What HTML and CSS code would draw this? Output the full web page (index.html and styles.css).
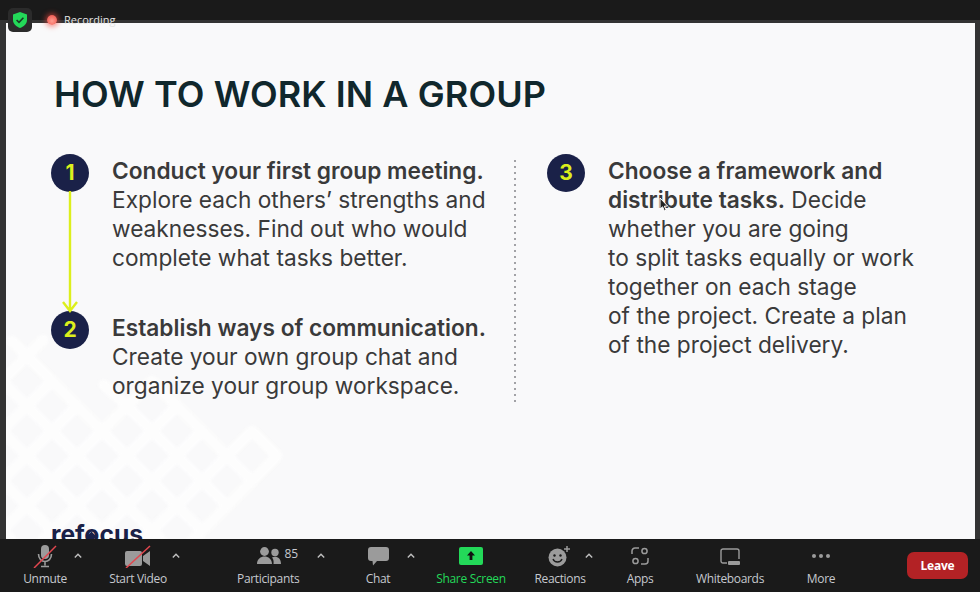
FILE: index.html
```html
<!DOCTYPE html>
<html lang="en">
<head>
  <meta charset="UTF-8">
  <title>Meeting - How to work in a group</title>
  <link rel="stylesheet" href="styles.css">
</head>
<body>
  <div class="window">
    <div class="topbar">
      <div class="shield-badge">
        <svg width="14" height="16" viewBox="0 0 14 16"><path d="M7 0 L14 2.5 V8 C14 12 10.5 14.6 7 16 C3.5 14.6 0 12 0 8 V2.5 Z" fill="#23d959"/><path d="M3.6 8 L6 10.4 L10.4 5.8" fill="none" stroke="#1a3a24" stroke-width="1.6"/></svg>
      </div>
      <span class="rec-dot"></span>
      <span class="rec-label">Recording</span>
    </div>

    <div class="stage">
      <div class="slide">
        <!-- lattice pattern, bottom left corner -->
        <svg class="lattice" width="290" height="220" viewBox="0 320 290 220">
          <defs><path id="cell" d="M-25 0 L0 -25 L25 0 L0 25 Z"/></defs>
          <g fill="none" stroke="#fdfdfd" stroke-width="11" stroke-linejoin="round" stroke-linecap="round">
            <path d="M27 357 L43 341 M27 357 L12 342 M127 407 L104 386"/>
            <use href="#cell" x="27" y="382"/><use href="#cell" x="2" y="407"/><use href="#cell" x="52" y="407"/>
            <use href="#cell" x="27" y="432"/><use href="#cell" x="127" y="432"/><use href="#cell" x="177" y="432"/>
            <use href="#cell" x="152" y="407"/><use href="#cell" x="77" y="432"/>
            <use href="#cell" x="2" y="457"/><use href="#cell" x="52" y="457"/><use href="#cell" x="102" y="457"/><use href="#cell" x="152" y="457"/><use href="#cell" x="202" y="457"/><use href="#cell" x="252" y="457"/>
            <use href="#cell" x="27" y="482"/><use href="#cell" x="77" y="482"/><use href="#cell" x="127" y="482"/><use href="#cell" x="177" y="482"/><use href="#cell" x="227" y="482"/>
            <use href="#cell" x="2" y="507"/><use href="#cell" x="52" y="507"/><use href="#cell" x="102" y="507"/><use href="#cell" x="152" y="507"/><use href="#cell" x="202" y="507"/>
            <use href="#cell" x="27" y="532"/><use href="#cell" x="77" y="532"/><use href="#cell" x="127" y="532"/><use href="#cell" x="177" y="532"/>
          </g>
        </svg>

        <h1>HOW TO WORK IN A GROUP</h1>

        <div class="columns">
          <div class="col-left">
            <svg class="arrow" width="20" height="122" viewBox="0 0 20 122"><path d="M10 0 V120 M3 111 L10 120 L17 111" fill="none" stroke="#dcef1c" stroke-width="2.4"/></svg>
            <div class="step step-one">
              <span class="num">1</span>
              <p><b>Conduct your first group meeting.</b><br>Explore each others’ strengths and<br>weaknesses. Find out who would<br>complete what tasks better.</p>
            </div>
            <div class="step">
              <span class="num">2</span>
              <p><b>Establish ways of communication.</b><br>Create your own group chat and<br>organize your group workspace.</p>
            </div>
          </div>
          <div class="divider"></div>
          <div class="col-right">
            <div class="step">
              <span class="num">3</span>
              <p><b>Choose a framework and<br>distribute tasks.</b> Decide<br>whether you are going<br>to split tasks equally or work<br>together on each stage<br>of the project. Create a plan<br>of the project delivery.</p>
            </div>
          </div>
        </div>

        <div class="logo">ref<span class="logo-o">o</span>cus</div>

        <svg class="cursor" width="10" height="16" viewBox="0 0 10 16"><path d="M1 1 V12 L3.6 9.8 L5.4 14 L7.2 13.2 L5.4 9.2 L8.6 9 Z" fill="#222" stroke="#fff" stroke-width="1"/></svg>
      </div>
    </div>

    <div class="toolbar">
      <div class="tool tool-unmute">
        <svg width="26" height="23" viewBox="0 0 26 23"><rect x="9" y="0" width="8" height="14" rx="4" fill="#9b9b9b"/><path d="M6.5 9 C6.5 19 19.5 19 19.5 9 M13 17 V20.5 M9 21.5 H17" fill="none" stroke="#9b9b9b" stroke-width="1.6"/><path d="M2 23 L24 1" stroke="#e2474f" stroke-width="1.5"/></svg>
        <span>Unmute</span>
      </div>
      <span class="caret"><svg width="8" height="5" viewBox="0 0 8 5"><path d="M0.8 4.4 L4 1.2 L7.2 4.4" fill="none" stroke="#c0c0c0" stroke-width="1.4"/></svg></span>

      <div class="tool tool-video">
        <svg width="26" height="23" viewBox="0 0 26 23"><path d="M2 6 H15 A2 2 0 0 1 17 8 V19 A2 2 0 0 1 15 21 H2 A2 2 0 0 1 0 19 V8 A2 2 0 0 1 2 6 Z M18 11 L25 6 V21 L18 16 Z" fill="#9b9b9b"/><path d="M1 23 L25 1" stroke="#e2474f" stroke-width="1.5"/></svg>
        <span>Start Video</span>
      </div>
      <span class="caret caret-video"><svg width="8" height="5" viewBox="0 0 8 5"><path d="M0.8 4.4 L4 1.2 L7.2 4.4" fill="none" stroke="#c0c0c0" stroke-width="1.4"/></svg></span>

      <div class="tool tool-people">
        <div class="people-icon">
          <svg width="24" height="18" viewBox="0 0 24 18"><circle cx="7.5" cy="4.5" r="4.4" fill="#9b9b9b"/><circle cx="18" cy="5.5" r="3.7" fill="#9b9b9b"/><path d="M0 17 C0 7 15 7 15 17 Z M16.5 17 C17 13.5 16 11.5 15 10.5 C19 8.5 24 10.5 24 17 Z" fill="#9b9b9b"/></svg>
          <em>85</em>
        </div>
        <span>Participants</span>
      </div>
      <span class="caret caret-people"><svg width="8" height="5" viewBox="0 0 8 5"><path d="M0.8 4.4 L4 1.2 L7.2 4.4" fill="none" stroke="#c0c0c0" stroke-width="1.4"/></svg></span>

      <div class="tool tool-chat">
        <svg width="21" height="19" viewBox="0 0 21 19"><path d="M3 0 H18 A3 3 0 0 1 21 3 V11 A3 3 0 0 1 18 14 H9 L5 18.5 L4.5 14 H3 A3 3 0 0 1 0 11 V3 A3 3 0 0 1 3 0 Z" fill="#9b9b9b"/></svg>
        <span>Chat</span>
      </div>
      <span class="caret caret-chat"><svg width="8" height="5" viewBox="0 0 8 5"><path d="M0.8 4.4 L4 1.2 L7.2 4.4" fill="none" stroke="#c0c0c0" stroke-width="1.4"/></svg></span>

      <div class="tool tool-share">
        <svg width="24" height="18" viewBox="0 0 24 18"><rect width="24" height="18" rx="2" fill="#23d959"/><path d="M12 4 L16 8.4 H13.4 V13 H10.6 V8.4 H8 Z" fill="#111"/></svg>
        <span>Share Screen</span>
      </div>

      <div class="tool tool-react">
        <svg width="24" height="21" viewBox="0 0 24 21"><circle cx="9.5" cy="11.5" r="9" fill="#9b9b9b"/><circle cx="6.5" cy="9.5" r="1.2" fill="#1a1a1a"/><circle cx="12.5" cy="9.5" r="1.2" fill="#1a1a1a"/><path d="M5 13 C6.5 17 12.5 17 14 13" fill="none" stroke="#1a1a1a" stroke-width="1.4"/><path d="M19 0 V6 M16 3 H22" stroke="#9b9b9b" stroke-width="1.5"/></svg>
        <span>Reactions</span>
      </div>
      <span class="caret caret-react"><svg width="8" height="5" viewBox="0 0 8 5"><path d="M0.8 4.4 L4 1.2 L7.2 4.4" fill="none" stroke="#c0c0c0" stroke-width="1.4"/></svg></span>

      <div class="tool tool-apps">
        <svg width="18" height="18" viewBox="0 0 18 18"><path d="M1 7 V4 A3 3 0 0 1 4 1 H8 M17 11 V14 A3 3 0 0 1 14 17 H10" fill="none" stroke="#9b9b9b" stroke-width="1.5"/><circle cx="13.5" cy="4" r="2.6" fill="none" stroke="#9b9b9b" stroke-width="1.5"/><circle cx="4.5" cy="14" r="2.6" fill="none" stroke="#9b9b9b" stroke-width="1.5"/></svg>
        <span>Apps</span>
      </div>

      <div class="tool tool-board">
        <svg width="20" height="17" viewBox="0 0 20 17"><path d="M7 15 H3 A2 2 0 0 1 1 13 V3 A2 2 0 0 1 3 1 H17 A2 2 0 0 1 19 3 V11" fill="none" stroke="#9b9b9b" stroke-width="1.4"/><rect x="8" y="13" width="12" height="4" rx="1" fill="#9b9b9b"/></svg>
        <span>Whiteboards</span>
      </div>

      <div class="tool tool-more">
        <svg width="20" height="6" viewBox="0 0 20 6"><circle cx="3" cy="3" r="2" fill="#9b9b9b"/><circle cx="10" cy="3" r="2" fill="#9b9b9b"/><circle cx="17" cy="3" r="2" fill="#9b9b9b"/></svg>
        <span>More</span>
      </div>

      <button class="leave">Leave</button>
    </div>
  </div>
</body>
</html>
```

FILE: styles.css
```css
* {
  box-sizing: border-box;
}

html, body {
  margin: 0;
  padding: 0;
  background-color: #1a1a1a;
}

.window {
  width: 980px;
  height: 592px;
  display: flex;
  flex-direction: column;
  position: relative;
  overflow: hidden;
  font-family: "Open Sans", "Noto Sans", sans-serif;
}

/* top strip with the security badge and recording label */
.topbar {
  height: 20px;
  position: relative;
  background-color: #1a1a1a;
  z-index: 2;
}

.shield-badge {
  position: absolute;
  left: 8px;
  top: 8px;
  width: 24px;
  height: 24px;
  background-color: #2b2b2b;
  border-radius: 5px;
  display: flex;
  align-items: center;
  justify-content: center;
}

.rec-dot {
  position: absolute;
  left: 47px;
  top: 15px;
  width: 10px;
  height: 10px;
  border-radius: 50%;
  background: radial-gradient(circle at 50% 60%, #ff9c90, #ee4a42);
  box-shadow: 0 0 5px 2px rgba(240, 70, 60, 0.55);
}

.rec-label {
  position: absolute;
  left: 64px;
  top: 12px;
  font-size: 11px;
  line-height: 16px;
  color: #e4e4e4;
}

.stage {
  height: 519px;
  padding: 3px 5px 0 6px;
  background-color: #333;
}

.slide {
  height: 516px;
  position: relative;
  overflow: hidden;
  padding: 0 0 0 45px;
  background-color: #f9f9fa;
  font-family: Inter, "Liberation Sans", sans-serif;
  color: #333;
}

.lattice {
  position: absolute;
  left: -6px;
  bottom: 0;
  filter: blur(1.5px);
}

h1 {
  position: relative;
  margin: 0;
  padding-top: 49px;
  padding-left: 3px;
  font-size: 36px;
  line-height: 44px;
  font-weight: 600;
  letter-spacing: 0.08px;
  color: #10272c;
}

.columns {
  position: relative;
  display: flex;
  margin-top: 38px;
}

.col-left {
  position: relative;
  width: 463px;
}

/* dots are spaced wider than a dotted border would give */
.divider {
  width: 2px;
  height: 242px;
  margin-top: 6px;
  background: repeating-linear-gradient(to bottom, #a2a2a6 0, #a2a2a6 2px, transparent 2px, transparent 6px);
}

.col-right {
  margin-left: 31px;
}

.step {
  display: flex;
}

.step-one {
  margin-bottom: 39px;
}

.num {
  flex: none;
  width: 38px;
  height: 38px;
  margin-right: 23px;
  border-radius: 50%;
  background-color: #1a2148;
  color: #dcef1c;
  font-weight: 700;
  font-size: 21px;
  line-height: 38px;
  text-align: center;
}

.step p {
  margin: 2px 0 0;
  font-size: 22.7px;
  line-height: 29px;
  color: #3a3a3a;
}

.step b {
  font-weight: 600;
}

.arrow {
  position: absolute;
  left: 9px;
  top: 37px;
}

.logo {
  position: absolute;
  left: 45px;
  top: 496px;
  font-size: 24.6px;
  line-height: 30px;
  font-weight: 700;
  color: #1a2148;
}

.logo-o {
  position: relative;
}

/* small diamond inside the o of the logo */
.logo-o::after {
  content: "";
  position: absolute;
  left: 50%;
  top: 55%;
  width: 7px;
  height: 7px;
  margin: -3px 0 0 -3.5px;
  background-color: #1a2148;
  transform: rotate(45deg);
}

.cursor {
  position: absolute;
  left: 653px;
  top: 174px;
}

/* bottom meeting toolbar */
.toolbar {
  flex: 1;
  display: flex;
  align-items: flex-start;
  padding-left: 17px;
  background-color: #1a1a1a;
}

.tool {
  flex: none;
  display: grid;
  grid-template-rows: 22px auto;
  justify-items: center;
  align-items: center;
  row-gap: 4px;
  padding-top: 6px;
  font-size: 12px;
  line-height: 16px;
  letter-spacing: -0.33px;
  color: #c6c9cf;
  white-space: nowrap;
}

.tool svg {
  display: block;
}

.caret {
  flex: none;
  width: 10px;
  height: 5px;
  margin-top: 14px;
  display: flex;
  justify-content: center;
}

.tool-unmute { width: 56px; }
.tool-video { width: 60px; margin-left: 25px; }
.tool-people { width: 62px; margin-left: 56px; }
.tool-chat { width: 40px; margin-left: 32px; }
.tool-share { width: 70px; margin-left: 20px; color: #23d959; }
.tool-react { width: 54px; margin-left: 27px; }
.tool-apps { width: 30px; margin-left: 31px; }
.tool-board { width: 70px; margin-left: 40px; }
.tool-more { width: 30px; margin-left: 41px; }

.caret-video { margin-left: 3px; }
.caret-people { margin-left: 17px; }
.caret-chat { margin-left: 8px; }
.caret-react { margin-left: -3px; }

.people-icon {
  display: flex;
  align-items: flex-start;
  gap: 4px;
  margin-left: 18px;
}

.people-icon em {
  font-style: normal;
  font-size: 12px;
  line-height: 14px;
}

.leave {
  width: 61px;
  height: 27px;
  margin: 13px 12px 0 auto;
  padding: 0;
  border: none;
  border-radius: 7px;
  background-color: #b32225;
  color: #fff;
  font-family: inherit;
  font-size: 12px;
  font-weight: 700;
  letter-spacing: -0.2px;
}
```
